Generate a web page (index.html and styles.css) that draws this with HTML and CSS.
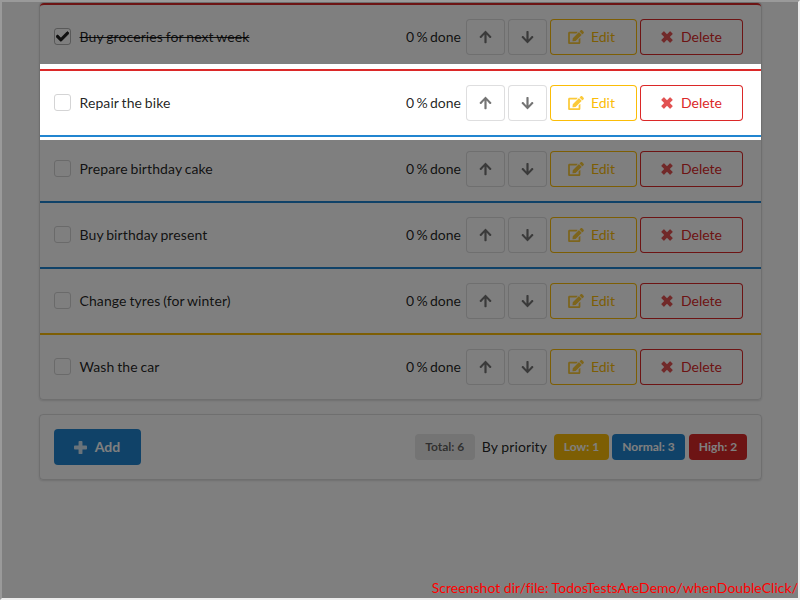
FILE: index.html
```html
<!DOCTYPE html>
<html lang="en">
<head>
<meta charset="utf-8">
<title>Todos</title>
<link rel="stylesheet" href="styles.css">
</head>
<body>
<svg class="sprite" aria-hidden="true">
  <symbol id="arrow" viewBox="0 0 448 512"><path d="M34.900 289.500l-22.200-22.200c-9.400-9.400-9.400-24.600 0-33.900L207 39c9.400-9.400 24.600-9.400 33.900 0l194.300 194.300c9.400 9.400 9.400 24.600 0 33.900L413 289.400c-9.500 9.500-25 9.300-34.300-.4L264 168.600V456c0 13.300-10.700 24-24 24h-32c-13.300 0-24-10.700-24-24V168.600L69.200 289.100c-9.300 9.800-24.800 10-34.300.4z"/></symbol>
  <symbol id="edit" viewBox="0 0 576 512"><path d="M402.600 83.200l90.200 90.200c3.800 3.800 3.800 10 0 13.800L274.400 405.600l-92.800 10.300c-12.400 1.400-22.900-9.100-21.500-21.500l10.300-92.800L388.800 83.200c3.800-3.800 10-3.800 13.800 0zm162-22.900l-48.800-48.800c-15.200-15.200-39.900-15.200-55.200 0l-35.400 35.400c-3.800 3.800-3.800 10 0 13.800l90.200 90.200c3.800 3.800 10 3.800 13.800 0l35.400-35.400c15.200-15.300 15.200-40 0-55.200zM384 346.200V448H64V128h229.800c3.200 0 6.200-1.300 8.500-3.500l40-40c7.600-7.600 2.200-20.500-8.500-20.500H48C21.500 64 0 85.500 0 112v352c0 26.500 21.500 48 48 48h352c26.500 0 48-21.500 48-48V306.200c0-10.700-12.900-16-20.500-8.500l-40 40c-2.200 2.300-3.500 5.300-3.500 8.500z"/></symbol>
  <symbol id="remove" viewBox="0 0 12 12"><path d="M3.300.5 6 3.200 8.700.5q.4-.4.800 0l2 2q.4.400 0 .8L8.800 6l2.700 2.700q.4.400 0 .8l-2 2q-.4.400-.8 0L6 8.800l-2.700 2.700q-.4.400-.8 0l-2-2q-.4-.4 0-.8L3.200 6 .5 3.300q-.4-.4 0-.8l2-2q.4-.4.8 0z"/></symbol>
  <symbol id="plus" viewBox="0 0 12 12"><path d="M5 0h2q.8 0 .8.800v3.400h3.400q.8 0 .8.800v2q0 .8-.8.800H7.800v3.400q0 .8-.8.800H5q-.8 0-.8-.8V7.800H.8Q0 7.800 0 7V5q0-.8.800-.8h3.400V.8Q4.200 0 5 0z"/></symbol>
  <symbol id="check" viewBox="0 0 512 512"><path stroke="currentColor" stroke-width="24" d="M173.900 439.400L7.500 273c-10-10-10-26.200 0-36.200l36.200-36.200c10-10 26.200-10 36.200 0L192 312.700 432.100 72.600c10-10 26.200-10 36.200 0l36.200 36.200c10 10 10 26.200 0 36.200L210.100 439.400c-10 10-26.200 10-36.200 0z"/></symbol>
</svg>
<main class="frame">
  <ul class="card todos">
    <li class="todo high done"><span class="box"><svg><use href="#check"/></svg></span><span class="name">Buy groceries for next week</span><span class="progress">0 % done</span><button class="btn move"><svg><use href="#arrow"/></svg></button><button class="btn move down"><svg><use href="#arrow"/></svg></button><button class="btn edit"><svg><use href="#edit"/></svg>Edit</button><button class="btn delete"><svg><use href="#remove"/></svg>Delete</button></li>
    <li class="todo high current"><span class="box"></span><span class="name">Repair the bike</span><span class="progress">0 % done</span><button class="btn move"><svg><use href="#arrow"/></svg></button><button class="btn move down"><svg><use href="#arrow"/></svg></button><button class="btn edit"><svg><use href="#edit"/></svg>Edit</button><button class="btn delete"><svg><use href="#remove"/></svg>Delete</button></li>
    <li class="todo normal"><span class="box"></span><span class="name">Prepare birthday cake</span><span class="progress">0 % done</span><button class="btn move"><svg><use href="#arrow"/></svg></button><button class="btn move down"><svg><use href="#arrow"/></svg></button><button class="btn edit"><svg><use href="#edit"/></svg>Edit</button><button class="btn delete"><svg><use href="#remove"/></svg>Delete</button></li>
    <li class="todo normal"><span class="box"></span><span class="name">Buy birthday present</span><span class="progress">0 % done</span><button class="btn move"><svg><use href="#arrow"/></svg></button><button class="btn move down"><svg><use href="#arrow"/></svg></button><button class="btn edit"><svg><use href="#edit"/></svg>Edit</button><button class="btn delete"><svg><use href="#remove"/></svg>Delete</button></li>
    <li class="todo normal"><span class="box"></span><span class="name">Change tyres (for winter)</span><span class="progress">0 % done</span><button class="btn move"><svg><use href="#arrow"/></svg></button><button class="btn move down"><svg><use href="#arrow"/></svg></button><button class="btn edit"><svg><use href="#edit"/></svg>Edit</button><button class="btn delete"><svg><use href="#remove"/></svg>Delete</button></li>
    <li class="todo low"><span class="box"></span><span class="name">Wash the car</span><span class="progress">0 % done</span><button class="btn move"><svg><use href="#arrow"/></svg></button><button class="btn move down"><svg><use href="#arrow"/></svg></button><button class="btn edit"><svg><use href="#edit"/></svg>Edit</button><button class="btn delete"><svg><use href="#remove"/></svg>Delete</button></li>
  </ul>
  <footer class="card summary">
    <button class="btn add"><svg><use href="#plus"/></svg>Add</button>
    <span class="label total">Total: 6</span>
    <span class="by">By priority</span>
    <span class="label l-low">Low: 1</span>
    <span class="label l-normal">Normal: 3</span>
    <span class="label l-high">High: 2</span>
  </footer>
  <p class="caption">Screenshot dir/file: TodosTestsAreDemo/whenDoubleClick/</p>
</main>
</body>
</html>
```

FILE: styles.css
```css
* { box-sizing: border-box; }
body { margin: 0; overflow: hidden; font: 14px/20px Lato, sans-serif; color: rgba(0,0,0,.87); background: #fff; }
.sprite { display: none; }
.frame {
  position: relative; width: 800px; height: 600px; overflow: hidden;
  border: 2px solid; border-color: #9a9a9a #eee #eee #9a9a9a;
  padding: 0 37px;
}
.card {
  width: 723px; margin: 0 0 14px; padding: 0; list-style: none;
  border: 1px solid rgba(34,36,38,.15); border-radius: 4px;
  box-shadow: 0 1px 2px rgba(34,36,38,.15);
}
.todo {
  display: flex; align-items: center; height: 66px;
  padding: 14px 18px 14px 14px; border-top: 2px solid;
}
.todo:first-child { border-radius: 4px 4px 0 0; }
.high { border-color: #db2828; }
.normal { border-color: #2185d0; }
.low { border-color: #fbbd08; }
.box {
  display: flex; align-items: center; justify-content: center;
  width: 17px; height: 17px; margin: 0 8.500px 1px 0;
  border: 1px solid #d4d4d5; border-radius: 3px;
}
.box svg { width: 13px; height: 13px; }
.done .box { border-color: rgba(34,36,38,.35); }
.done .name { text-decoration: line-through; }
.name { letter-spacing: .1px; word-spacing: -.9px; margin-right: auto; }
.progress { margin-right: 5px; word-spacing: -1.200px; }
.btn {
  display: flex; align-items: center; justify-content: center;
  height: 36px; margin: 0 3.5px 0 0; padding: 0; border: 0; border-radius: 4px;
  font: 14px/14px Lato, sans-serif; background: none; color: rgba(0,0,0,.6);
}
.btn:last-child { margin-right: 0; }
svg { fill: currentColor; }
.btn svg { opacity: .8; }
.move { width: 38.5px; color: rgba(0,0,0,.68); box-shadow: inset 0 0 0 1px rgba(34,36,38,.15); }
.move svg { width: 13px; height: 14px; }
.down svg { transform: rotate(180deg); }
.edit { width: 86.500px; padding-right: 3px; color: #fbbd08; box-shadow: inset 0 0 0 1px #fbbd08; }
.edit svg { width: 16px; height: 14px; margin-right: 6.500px; }
.delete { width: 103px; color: #db2828; box-shadow: inset 0 0 0 1px #db2828; }
.delete svg { width: 12px; height: 12px; margin-right: 8px; }
.current { position: relative; }
.current::after {
  content: ""; position: absolute; z-index: 1; inset: -7px 0 -5px;
  box-shadow: 0 0 0 1000px rgba(0,0,0,.5); pointer-events: none;
}
.summary { display: flex; align-items: center; height: 66px; padding: 14px; }
.add { width: 87px; padding-right: 1px; margin-right: auto; font-weight: 700; color: #fff; background: #2185d0; }
.add svg { width: 13px; height: 13px; margin-right: 8px; }
.label {
  height: 26px; border-radius: 4px; white-space: nowrap;
  font-size: 12px; font-weight: 700; line-height: 26px; text-align: center; color: #fff;
}
.total { width: 60px; background: #e8e8e8; color: rgba(0,0,0,.6); }
.by { margin: 0 7px; letter-spacing: .09px; }
.l-low { width: 55px; background: #fbbd08; }
.l-normal { width: 73px; margin: 0 4px 0 3px; background: #2185d0; }
.l-high { width: 58px; background: #db2828; }
.caption { position: absolute; z-index: 2; right: 0; bottom: 0; margin: 0; color: red; white-space: nowrap; letter-spacing: .02px; }
```
